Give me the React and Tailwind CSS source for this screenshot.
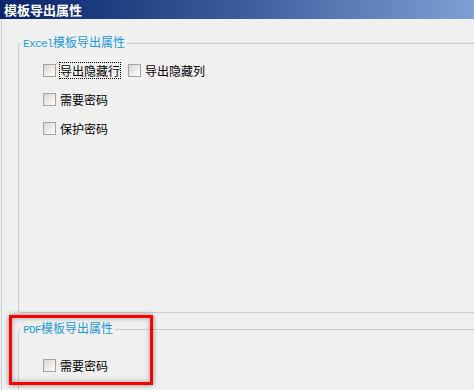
import React from "react";

function Box() {
  return (
    <span className="block w-[13px] h-[13px] shrink-0 border border-[#a3a3a3] bg-gradient-to-br from-[#d6d6d6] to-white" />
  );
}

function Legend({ latin, cjk }) {
  return (
    <legend className="ml-[2px] px-[2px] text-[12px] leading-[12px] text-[#1a9ad6]">
      <span className="font-['Liberation_Mono',monospace] text-[11px] tracking-[-0.6px]">{latin}</span>
      <span>{cjk}</span>
    </legend>
  );
}

export default function App() {
  return (
    <div className="relative w-[474px] h-[390px] overflow-hidden bg-[#f0f0f0] flex flex-col font-['Noto_Sans_CJK_SC','Noto_Sans',sans-serif] text-[12px] text-black">
      <div className="h-[2px] bg-[#d4d0c8]" />
      <div className="h-px bg-[#ececec]" />
      <div className="h-[19px] bg-gradient-to-r from-[#0a246a] via-[#3a5c9c] to-[#7ea1d4] text-white font-bold text-[13px] leading-[19px] pl-[4px]">
        模板导出属性
      </div>
      <div className="h-px bg-[#d4d0c8]" />
      <div className="flex-1 ml-px border-l border-[#d0d0d0] pl-[16px] pt-[17px] flex flex-col">
        <fieldset className="w-[520px] h-[277px] shrink-0 border border-[#cdcdcd] rounded-[3px]">
          <Legend latin="Excel" cjk="模板导出属性" />
          <div className="pl-[24px] pt-[14px] flex flex-col gap-[16px]">
            <div className="flex items-center h-[13px]">
              <Box />
              <span className="ml-[3px] border border-dotted border-black py-[1px] leading-[13px]">导出隐藏行</span>
              <span className="ml-[7px]"><Box /></span>
              <span className="ml-[4px] leading-[13px]">导出隐藏列</span>
            </div>
            <div className="flex items-center h-[13px]">
              <Box />
              <span className="ml-[4px] leading-[13px]">需要密码</span>
            </div>
            <div className="flex items-center h-[13px]">
              <Box />
              <span className="ml-[4px] leading-[13px]">保护密码</span>
            </div>
          </div>
        </fieldset>
        <fieldset className="mt-[9px] w-[520px] h-[120px] shrink-0 border border-[#cdcdcd] rounded-[3px]">
          <Legend latin="PDF" cjk="模板导出属性" />
          <div className="pl-[24px] pt-[23px] flex flex-col">
            <div className="flex items-center h-[13px]">
              <Box />
              <span className="ml-[4px] leading-[13px]">需要密码</span>
            </div>
          </div>
        </fieldset>
      </div>
      <div className="absolute left-[9px] top-[315px] w-[144px] h-[70px] border-[3px] border-[#ff0000] shadow-[0_0_5px_rgba(0,0,0,0.45),inset_0_0_5px_rgba(0,0,0,0.35)]" />
    </div>
  );
}
